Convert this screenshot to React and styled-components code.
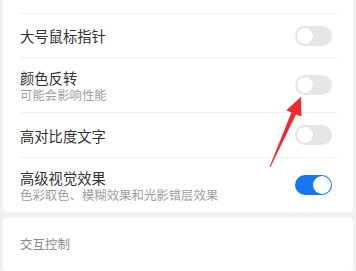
import React, { useState } from "react";
import styled, { createGlobalStyle } from "styled-components";

const GlobalStyle = createGlobalStyle`
  html, body {
    margin: 0;
    padding: 0;
    background: #f1f1f1;
    font-family: "Noto Sans CJK SC", "Noto Sans", sans-serif;
  }
  * {
    box-sizing: border-box;
  }
`;

const Page = styled.div`
  position: relative;
  width: 356px;
  height: 271px;
  overflow: hidden;
  padding: 0 3px;
  display: flex;
  flex-direction: column;
  gap: 6px;
`;

const Card = styled.div`
  background: #fff;
  border-radius: ${(p) => (p.$top ? "0 0 4px 4px" : "4px")};
  padding: 0 16px 0 17px;
  flex: ${(p) => (p.$grow ? "1" : "none")};
`;

const TopSpacer = styled.div`
  height: 14px;
  border-bottom: 1px solid #efefef;
`;

const Row = styled.div`
  height: ${(p) => p.$h}px;
  display: flex;
  align-items: center;
  justify-content: space-between;
  padding-right: 5px;
  border-bottom: ${(p) => (p.$last ? "none" : "1px solid #efefef")};
`;

const Texts = styled.div`
  display: flex;
  flex-direction: column;
  align-self: ${(p) => (p.$sub ? "flex-start" : "center")};
  padding-top: ${(p) => (p.$sub ? "10px" : "0")};
`;

const Title = styled.div`
  font-size: 14.3px;
  line-height: 19px;
  color: #333;
`;

const Sub = styled.div`
  font-size: 12.4px;
  line-height: 17px;
  color: #a0a0a0;
`;

const Track = styled.button`
  width: 37px;
  height: 20px;
  border-radius: 10px;
  border: none;
  padding: 1px;
  background: ${(p) => (p.$on ? "#1677f2" : "#e6e6e6")};
  display: flex;
  justify-content: ${(p) => (p.$on ? "flex-end" : "flex-start")};
  cursor: pointer;
`;

const Knob = styled.span`
  width: 18px;
  height: 18px;
  border-radius: 50%;
  background: #fff;
  box-shadow: ${(p) => (p.$on ? "none" : "0 0 0 1px #dcdcdc inset")};
`;

const SectionHead = styled.div`
  padding-top: 17px;
  font-size: 12.5px;
  line-height: 18px;
  color: #888;
`;

const Arrow = styled.svg`
  position: absolute;
  left: 0;
  top: 0;
  pointer-events: none;
`;

const Toggle = ({ on, onClick }) => (
  <Track $on={on} onClick={onClick}>
    <Knob $on={on} />
  </Track>
);

const rows = [
  { title: "大号鼠标指针", h: 44 },
  { title: "颜色反转", sub: "可能会影响性能", h: 55 },
  { title: "高对比度文字", h: 45 },
  { title: "高级视觉效果", sub: "色彩取色、模糊效果和光影错层效果", h: 54, on: true },
];

export default function App() {
  const [state, setState] = useState(rows.map((r) => !!r.on));

  return (
    <>
      <GlobalStyle />
      <Page>
        <Card $top>
          <TopSpacer />
          {rows.map((r, i) => (
            <Row key={r.title} $h={r.h} $last={i === rows.length - 1}>
              <Texts $sub={!!r.sub}>
                <Title>{r.title}</Title>
                {r.sub && <Sub>{r.sub}</Sub>}
              </Texts>
              <Toggle
                on={state[i]}
                onClick={() => setState((s) => s.map((v, j) => (j === i ? !v : v)))}
              />
            </Row>
          ))}
        </Card>
        <Card $grow>
          <SectionHead>交互控制</SectionHead>
        </Card>
        <Arrow width="356" height="271" viewBox="0 0 356 271">
          <polygon points="301,97 301.5,116.5 296,114.4 270.5,167 269.5,167 291.4,112.4 286.3,110.2" fill="#f0292e" />
        </Arrow>
      </Page>
    </>
  );
}
